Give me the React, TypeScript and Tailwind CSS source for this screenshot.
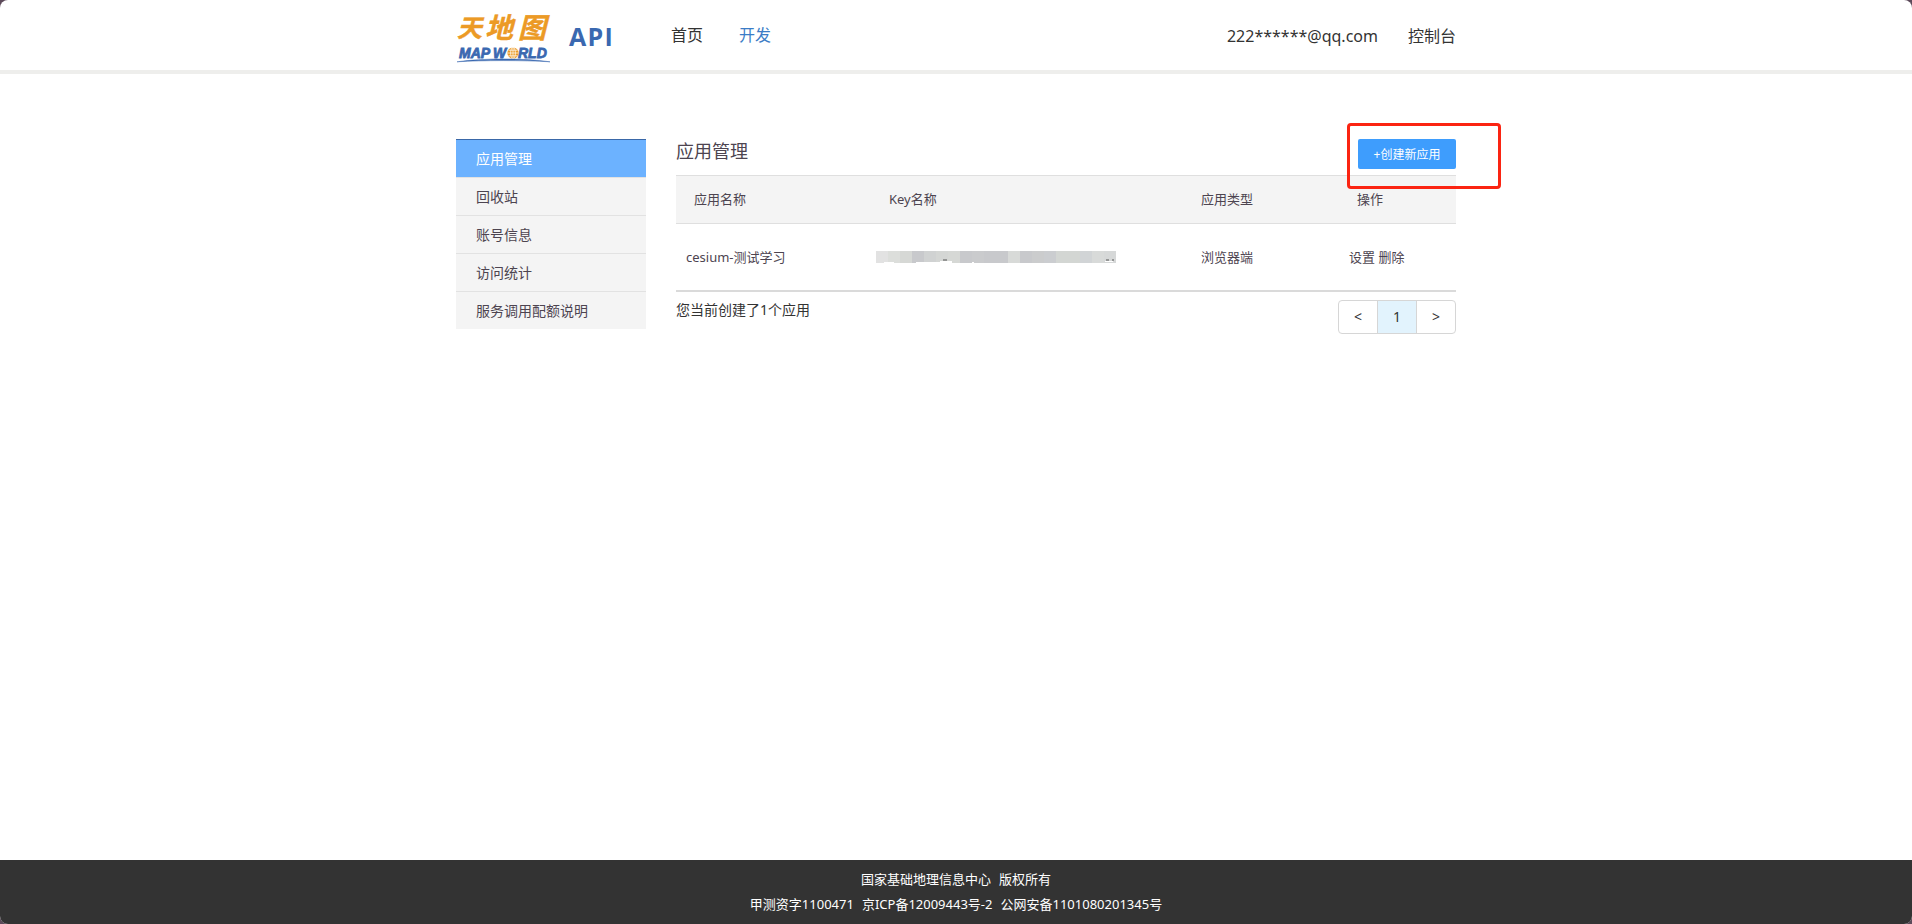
const menu = ['应用管理', '回收站', '账号信息', '访问统计', '服务调用配额说明'];

const maskColors = [
  '#e2e2e2', '#dcdedb', '#d6d8d5', '#c8c9cc', '#d0d2d2', '#d4d6d4', '#d6d8d5',
  '#c8c9cc', '#cacbcd', '#c8c9cc', '#c8c9cc', '#d8dad8', '#c8c9cc', '#cbcccd',
  '#cbcdd0', '#d3d6d3', '#d3d6d3', '#d1d4d6', '#d8dad9', '#d6d8d8',
];

function Logo() {
  return (
    <svg viewBox="0 0 96 70" className="h-[70px] w-24" role="img" aria-label="天地图 MAP WORLD">
      <g fill="#ec9a25" stroke="#ec9a25" strokeWidth="0.4" fontFamily="'Noto Sans CJK SC', sans-serif" fontWeight="700" fontStyle="italic">
        <text x="1" y="37" fontSize="25">天</text>
        <text x="29" y="38" fontSize="28">地</text>
        <text x="62" y="38" fontSize="28">图</text>
      </g>
      <g fill="#3a68b0" stroke="#3a68b0" strokeWidth="0.8" fontFamily="'Liberation Sans', sans-serif" fontWeight="700" fontStyle="italic" fontSize="14">
        <text x="3" y="58">MAP</text>
        <text x="37" y="58">W</text>
        <text x="62" y="58">RLD</text>
      </g>
      <circle cx="57" cy="53" r="5.6" fill="#ec9a25" />
      <g fill="none" stroke="#fff" strokeWidth="0.7">
        <ellipse cx="57" cy="53" rx="2.4" ry="5.6" />
        <path d="M51.5 53h11M52.4 50.2h9.2M52.4 55.8h9.2M57 47.4v11.2" />
      </g>
      <path d="M1 61.8C26 58 69 58 94 61.8C67 60.2 27 60.2 1 61.8Z" fill="#3a68b0" stroke="#3a68b0" strokeWidth="0.5" />
    </svg>
  );
}

function MaskedKey() {
  return (
    <svg viewBox="0 0 240 12" className="h-3 w-60" role="img" aria-label="Key">
      {maskColors.map((c, i) => (
        <rect key={i} x={i * 12} y="0" width="12" height="12" fill={c} />
      ))}
      <path d="M8 11h10v1H8zM40 11h26v1H40zM64 10h12v2H64zM96 11h2v1h-2zM229 10h8v1h-8z" fill="#fff" />
      <path d="M67 9h4M230 9h3M236 9h2" stroke="#555" strokeWidth="1" />
    </svg>
  );
}

export default function App() {
  return (
    <div className="min-h-screen bg-[#5c4a5a] font-['Noto_Sans','Noto_Sans_CJK_SC',sans-serif] text-[#333]">
      <div className="flex min-h-screen flex-col overflow-hidden rounded-lg bg-white">
        <header className="border-b-4 border-[#eeeeec]">
          <div className="mx-auto flex h-[70px] w-full max-w-[1000px] items-center">
            <Logo />
            <span className="ml-[17px] pt-0.5 font-['Open_Sans',sans-serif] text-[25px] leading-8 font-bold tracking-wider text-[#3a68b0]">API</span>
            <nav className="ml-[57px] flex gap-9 text-base leading-6">
              <a href="#home">首页</a>
              <a href="#dev" className="text-[#3b7cc6]">开发</a>
            </nav>
            <div className="ml-auto flex gap-[30px] pt-0.5 text-base leading-6">
              <a href="#account">222******@qq.com</a>
              <a href="#console">控制台</a>
            </div>
          </div>
        </header>

        <div className="mx-auto flex w-full max-w-[1000px] flex-1 items-start gap-[30px] pt-[65px] pb-10">
          <aside className="w-[190px] shrink-0 text-sm">
            <ul>
              {menu.map((item, i) => (
                <li key={item}>
                  <a
                    href="#menu"
                    className={
                      i === 0
                        ? 'flex h-[38px] items-center border-t border-[#3a68a8] bg-[#6cb2ff] px-5 text-white'
                        : 'flex h-[38px] items-center border-t border-[#e2e2e2] bg-[#f4f4f4] px-5 text-[#4d4450]'
                    }
                  >
                    {item}
                  </a>
                </li>
              ))}
            </ul>
          </aside>

          <main className="min-w-0 flex-1">
            <div className="flex h-9 items-start justify-between">
              <h1 className="text-lg leading-6 text-[#4d4450]">应用管理</h1>
              <div className="relative">
                <button type="button" className="block h-[30px] w-[98px] rounded-xs bg-[#3e9dfd] pt-0.5 text-xs text-white">
                  +创建新应用
                </button>
                <div className="pointer-events-none absolute -top-4 -right-[45px] -bottom-5 -left-[11px] rounded border-3 border-[#fb2412]" />
              </div>
            </div>

            <table className="w-full table-fixed border-collapse text-left text-[13px] leading-5 text-[#4d4450]">
              <thead>
                <tr className="h-12 border-y border-[#dfdfdf] bg-[#f4f4f4]">
                  <th className="w-1/4 pb-0.5 pl-[18px] font-normal">应用名称</th>
                  <th className="w-2/5 pb-0.5 pl-[18px] font-normal">Key名称</th>
                  <th className="w-1/5 pb-0.5 pl-[18px] font-normal">应用类型</th>
                  <th className="w-[15%] pb-0.5 pl-[18px] font-normal">操作</th>
                </tr>
              </thead>
              <tbody>
                <tr className="h-[67px] border-b-2 border-[#dadada]">
                  <td className="pl-[10px]">cesium-测试学习</td>
                  <td className="pl-[5px]"><MaskedKey /></td>
                  <td className="pl-[18px]">浏览器端</td>
                  <td className="pl-[10px]">
                    <a href="#set">设置</a> <a href="#delete">删除</a>
                  </td>
                </tr>
              </tbody>
            </table>

            <div className="mt-2 flex items-start justify-between">
              <p className="text-sm leading-5">您当前创建了1个应用</p>
              <div className="flex h-[34px] w-[118px] divide-x divide-[#d6d6d6] overflow-hidden rounded border border-[#d6d6d6] text-sm">
                <button type="button" className="flex-1">&lt;</button>
                <button type="button" className="flex-1 bg-[#e2f3fd]">1</button>
                <button type="button" className="flex-1">&gt;</button>
              </div>
            </div>
          </main>
        </div>

        <footer className="bg-[#333] py-[7px] text-[13px] leading-[25px] text-white">
          <p className="flex justify-center gap-2">
            <span>国家基础地理信息中心</span>
            <span>版权所有</span>
          </p>
          <p className="flex justify-center gap-2">
            <span>甲测资字1100471</span>
            <span>京ICP备12009443号-2</span>
            <span>公网安备1101080201345号</span>
          </p>
        </footer>
      </div>
    </div>
  );
}
